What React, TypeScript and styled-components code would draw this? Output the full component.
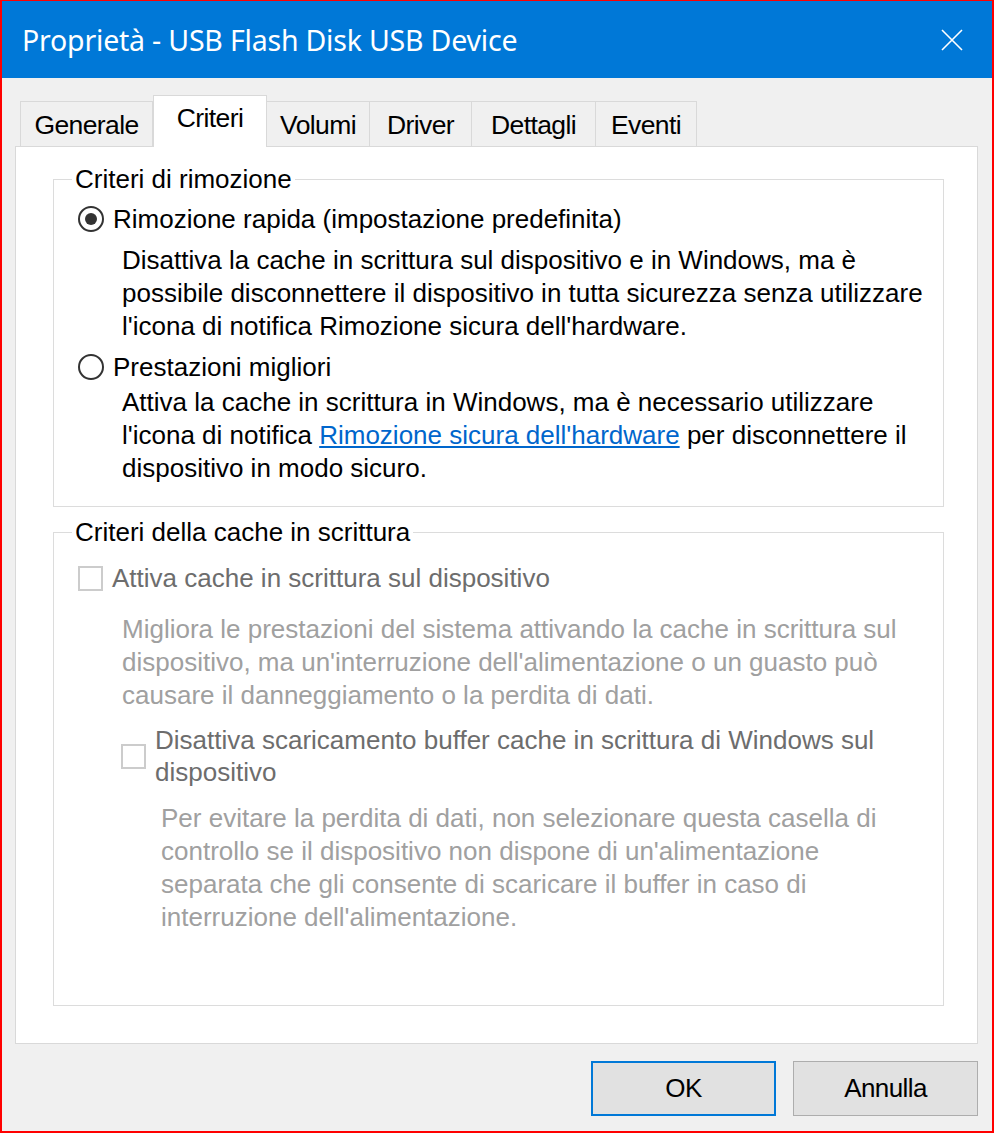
import styled, { createGlobalStyle } from "styled-components";

const GlobalStyle = createGlobalStyle`
    html, body {
        margin: 0;
        padding: 0;
        background: #ffffff;
    }
    * {
        box-sizing: border-box;
    }
`

const tabs = [
    {name: "Generale", width: 133},
    {name: "Criteri", width: 114},
    {name: "Volumi", width: 103},
    {name: "Driver", width: 102},
    {name: "Dettagli", width: 124},
    {name: "Eventi", width: 101},
];

export default function App() {
    return (
        <>
            <GlobalStyle/>
            <Window>
                <TitleBar>
                    <Title>Proprietà - USB Flash Disk USB Device</Title>
                    <CloseButton>
                        <svg width="22" height="22" viewBox="0 0 22 22">
                            <path d="M1 1 L21 21 M21 1 L1 21" stroke="#ffffff" strokeWidth="1.6" fill="none"/>
                        </svg>
                    </CloseButton>
                </TitleBar>
                <Body>
                    <TabStrip>
                        {tabs.map(t => (
                            <Tab key={t.name} width={t.width} active={t.name === "Criteri"}>{t.name}</Tab>
                        ))}
                    </TabStrip>
                    <Panel>
                        <Group height={341} top={9}>
                            <Legend>Criteri di rimozione</Legend>
                            <OptionRow>
                                <Radio checked/>
                                <Label>Rimozione rapida (impostazione predefinita)</Label>
                            </OptionRow>
                            <Description top={7}>
                                Disattiva la cache in scrittura sul dispositivo e in Windows, ma è<br/>
                                possibile disconnettere il dispositivo in tutta sicurezza senza utilizzare<br/>
                                l'icona di notifica Rimozione sicura dell'hardware.
                            </Description>
                            <OptionRow>
                                <Radio/>
                                <Label>Prestazioni migliori</Label>
                            </OptionRow>
                            <Description top={1}>
                                Attiva la cache in scrittura in Windows, ma è necessario utilizzare<br/>
                                l'icona di notifica <Link>Rimozione sicura dell'hardware</Link> per disconnettere il<br/>
                                dispositivo in modo sicuro.
                            </Description>
                        </Group>
                        <Group height={487} top={8}>
                            <Legend>Criteri della cache in scrittura</Legend>
                            <OptionRow top={7}>
                                <Checkbox/>
                                <Label disabled>Attiva cache in scrittura sul dispositivo</Label>
                            </OptionRow>
                            <Description disabled top={17}>
                                Migliora le prestazioni del sistema attivando la cache in scrittura sul<br/>
                                dispositivo, ma un'interruzione dell'alimentazione o un guasto può<br/>
                                causare il danneggiamento o la perdita di dati.
                            </Description>
                            <NestedOption>
                                <Checkbox/>
                                <Label disabled>
                                    Disattiva scaricamento buffer cache in scrittura di Windows sul<br/>
                                    dispositivo
                                </Label>
                            </NestedOption>
                            <Description disabled nested top={14}>
                                Per evitare la perdita di dati, non selezionare questa casella di<br/>
                                controllo se il dispositivo non dispone di un'alimentazione<br/>
                                separata che gli consente di scaricare il buffer in caso di<br/>
                                interruzione dell'alimentazione.
                            </Description>
                        </Group>
                    </Panel>
                    <ButtonBar>
                        <Button primary>OK</Button>
                        <Button>Annulla</Button>
                    </ButtonBar>
                </Body>
            </Window>
        </>
    );
}

const Window = styled.div`
    width: 994px;
    height: 1133px;
    border: 2px solid #ff0000;
    border-top-width: 1px;
    display: flex;
    flex-direction: column;
    background: #f0f0f0;
    font-family: "Liberation Sans", Arial, sans-serif;
    color: #000000;
`

const TitleBar = styled.div`
    height: 77px;
    background: #0078d7;
    display: flex;
    align-items: center;
    justify-content: space-between;
    padding: 0 29px 0 20px;
`

const Title = styled.span`
    font-family: "Noto Sans", "Open Sans", sans-serif;
    font-size: 28.5px;
    color: #ffffff;
    letter-spacing: -0.2px;
`

const CloseButton = styled.span`
    display: flex;
    width: 22px;
    height: 22px;
`

const Body = styled.div`
    flex: 1;
    display: flex;
    flex-direction: column;
    padding: 22px 14px 0 13px;
`

const TabStrip = styled.div`
    display: flex;
    align-items: flex-end;
    height: 47px;
    padding-left: 5px;
    position: relative;
    z-index: 1;
    margin-bottom: -1px;
`

const Tab = styled.div<{ active?: boolean; width: number }>`
    width: ${p => p.width}px;
    height: ${p => (p.active ? "52px" : "46px")};
    padding-top: ${p => (p.active ? "7px" : "8px")};
    text-align: center;
    background: ${p => (p.active ? "#ffffff" : "#f0f0f0")};
    border: 1px solid #d9d9d9;
    border-bottom: ${p => (p.active ? "none" : "1px solid #d9d9d9")};
    border-left-width: ${p => (p.active ? "1px" : "0")};
    font-size: 26.5px;
    line-height: 30px;
    letter-spacing: -0.6px;
    &:first-child {
        border-left-width: 1px;
    }
`

const Panel = styled.div`
    height: 898px;
    background: #ffffff;
    border: 1px solid #d9d9d9;
    padding: 19px 33px 0 37px;
    display: flex;
    flex-direction: column;
    gap: 12px;
`

const Group = styled.fieldset<{ height: number; top: number }>`
    height: ${p => p.height}px;
    margin: 0;
    padding: ${p => p.top}px 10px 0 24px;
    border: 1px solid #dcdcdc;
    display: flex;
    flex-direction: column;
`

const Legend = styled.legend`
    font-size: 26px;
    line-height: 26px;
    padding: 0 3px;
    margin-left: -6px;
`

const OptionRow = styled.div<{ top?: number }>`
    display: flex;
    align-items: center;
    gap: 9px;
    height: 36px;
    margin-top: ${p => p.top ?? 0}px;
`

const NestedOption = styled.div`
    display: flex;
    align-items: center;
    gap: 9px;
    margin: 6px 0 0 43px;
`

const Radio = styled.span<{ checked?: boolean }>`
    width: 26px;
    height: 26px;
    border-radius: 50%;
    border: 2px solid #333333;
    display: flex;
    align-items: center;
    justify-content: center;
    flex-shrink: 0;
    &::after {
        content: "";
        display: ${p => (p.checked ? "block" : "none")};
        width: 12px;
        height: 12px;
        border-radius: 50%;
        background: #333333;
    }
`

const Checkbox = styled.span`
    width: 25px;
    height: 25px;
    border: 2px solid #cccccc;
    background: #ffffff;
    flex-shrink: 0;
`

const Label = styled.span<{ disabled?: boolean }>`
    font-size: 26px;
    line-height: 32px;
    color: ${p => (p.disabled ? "#6d6d6d" : "#000000")};
`

const Description = styled.div<{ disabled?: boolean; nested?: boolean; top: number }>`
    margin: ${p => p.top}px 0 6px ${p => (p.nested ? 83 : 44)}px;
    font-size: 26px;
    line-height: 33px;
    color: ${p => (p.disabled ? "#a0a0a0" : "#000000")};
`

const Link = styled.span`
    color: #0066cc;
    text-decoration: underline;
`

const ButtonBar = styled.div`
    display: flex;
    justify-content: flex-end;
    gap: 17px;
    padding-top: 17px;
`

const Button = styled.div<{ primary?: boolean }>`
    width: 185px;
    height: 55px;
    display: flex;
    align-items: center;
    justify-content: center;
    background: #e1e1e1;
    border: ${p => (p.primary ? "2px solid #0078d7" : "1px solid #adadad")};
    font-size: 26px;
    letter-spacing: -0.6px;
`
